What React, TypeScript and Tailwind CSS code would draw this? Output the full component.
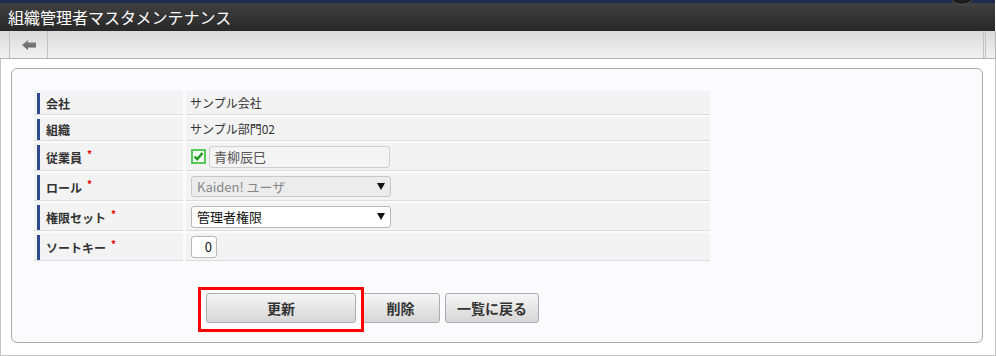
import React from "react";

const Req = () => <span className="text-[#e00] text-[10px] ml-[5px] relative top-[-4px]">*</span>;

const Tri = () => (
  <svg width="8" height="7" viewBox="0 0 8 7" className="block">
    <path d="M0 0 H8 L4 7 Z" fill="#111" />
  </svg>
);

function Row({ label, req, h, children }: { label: string; req?: boolean; h: string; children: React.ReactNode }) {
  return (
    <div className="flex gap-[3px] mb-[2px]">
      <div className={`w-[149px] ${h} bg-[#f3f3f3] border-b border-[#dcdcdc] pl-[3px] pt-[2px] flex`}>
        <div className="border-l-[3px] border-[#2f4a8e] pl-[6px] flex items-center w-full text-[12px] font-bold text-[#333]">
          {label}
          {req && <Req />}
        </div>
      </div>
      <div className={`w-[524px] ${h} bg-[#f3f3f3] border-b border-[#dcdcdc] pl-[4px] flex items-center text-[12px] text-[#333]`}>
        {children}
      </div>
    </div>
  );
}

export default function App() {
  return (
    <div className="w-[996px] h-[356px] bg-white relative overflow-hidden font-['Noto_Sans_CJK_JP','Noto_Sans',sans-serif]">
      {/* header */}
      <div className="w-[995px] h-[31px] border-t-[3px] border-[#1e2a4f] bg-gradient-to-b from-[#404040] to-[#282828] flex items-center pl-[8px] text-white text-[16px] leading-none">
        組織管理者マスタメンテナンス
      </div>
      <div className="absolute left-[947px] top-[-25px] w-[30px] h-[30px] rounded-full bg-[#1c1c1c] border border-[#555]" />
      {/* toolbar */}
      <div className="w-[996px] h-[28px] flex bg-gradient-to-b from-[#dadada] to-[#f1f1f1] border-b border-r border-[#b4b4b4]">
        <div className="w-[10px] h-full border-r border-[#c2c2c2]" />
        <div className="w-[38px] h-full border-r border-[#c2c2c2] flex items-center justify-center">
          <svg width="14" height="10" viewBox="0 0 14 10" className="block">
            <defs>
              <linearGradient id="ag" x1="0" y1="0" x2="0" y2="1">
                <stop offset="0" stopColor="#8a8a8a" />
                <stop offset="1" stopColor="#5e5e5e" />
              </linearGradient>
            </defs>
            <path d="M0 5 L6 0 V2.5 H14 V7.5 H6 V10 Z" fill="url(#ag)" />
          </svg>
        </div>
        <div className="flex-1" />
        <div className="w-[3px] h-full border-l border-r border-[#c2c2c2]" />
        <div className="w-[9px]" />
      </div>
      {/* body */}
      <div className="w-[996px] h-[297px] border-l border-r border-b border-[#c4c4c4] pt-[9px] pl-[10px]">
        <div className="w-[972px] h-[275px] border border-[#ababab] rounded-[6px] bg-[#fbfbfe] pt-[22px] pl-[22px]">
          <Row label="会社" h="h-[24px]">サンプル会社</Row>
          <Row label="組織" h="h-[24px]">サンプル部門02</Row>
          <Row label="従業員" req h="h-[28px]">
            <svg width="15" height="15" viewBox="0 0 15 15" className="block ml-[1px]">
              <rect x="1" y="1" width="13" height="13" fill="#f4fff4" stroke="#57c957" strokeWidth="2" />
              <path d="M3.5 7.5 L6.2 10.2 L11.5 4" fill="none" stroke="#1f9a1f" strokeWidth="2.4" />
            </svg>
            <div className="ml-[3px] w-[181px] h-[22px] border border-[#cfcfcf] rounded-[3px] bg-[#f4f4f4] flex items-center pl-[4px] text-[13px] text-[#555]">
              青柳辰巳
            </div>
          </Row>
          <Row label="ロール" req h="h-[28px]">
            <div className="ml-[1px] w-[200px] h-[21px] border border-[#c8c8c8] rounded-[3px] bg-[#ececec] flex items-center justify-between pl-[5px] pr-[5px] text-[13px] text-[#888]">
              <span>Kaiden! ユーザ</span>
              <Tri />
            </div>
          </Row>
          <Row label="権限セット" req h="h-[28px]">
            <div className="ml-[1px] w-[200px] h-[22px] border border-[#b8b8b8] rounded-[3px] bg-white flex items-center justify-between pl-[5px] pr-[5px] text-[13px] text-[#111]">
              <span>管理者権限</span>
              <Tri />
            </div>
          </Row>
          <Row label="ソートキー" req h="h-[28px]">
            <div className="ml-[1px] w-[26px] h-[22px] border border-[#b8b8b8] rounded-[3px] bg-white flex items-center justify-end pr-[4px] text-[13px] text-[#111]">
              0
            </div>
          </Row>
          <div className="flex gap-[5px] ml-[172px] mt-[32px]">
            <button className="w-[150px] h-[30px] border border-[#adadad] rounded-[3px] bg-gradient-to-b from-[#f6f6f6] to-[#d6d6d6] text-[14px] font-bold text-[#333]">
              更新
            </button>
            <button className="w-[79px] h-[30px] border border-[#adadad] rounded-[3px] bg-gradient-to-b from-[#f6f6f6] to-[#d6d6d6] text-[14px] font-bold text-[#333]">
              削除
            </button>
            <button className="w-[94px] h-[30px] border border-[#adadad] rounded-[3px] bg-gradient-to-b from-[#f6f6f6] to-[#d6d6d6] text-[14px] font-bold text-[#333]">
              一覧に戻る
            </button>
          </div>
        </div>
      </div>
      <div className="absolute left-[198px] top-[287px] w-[166px] h-[45px] border-[3px] border-[#ff0000]" />
    </div>
  );
}
